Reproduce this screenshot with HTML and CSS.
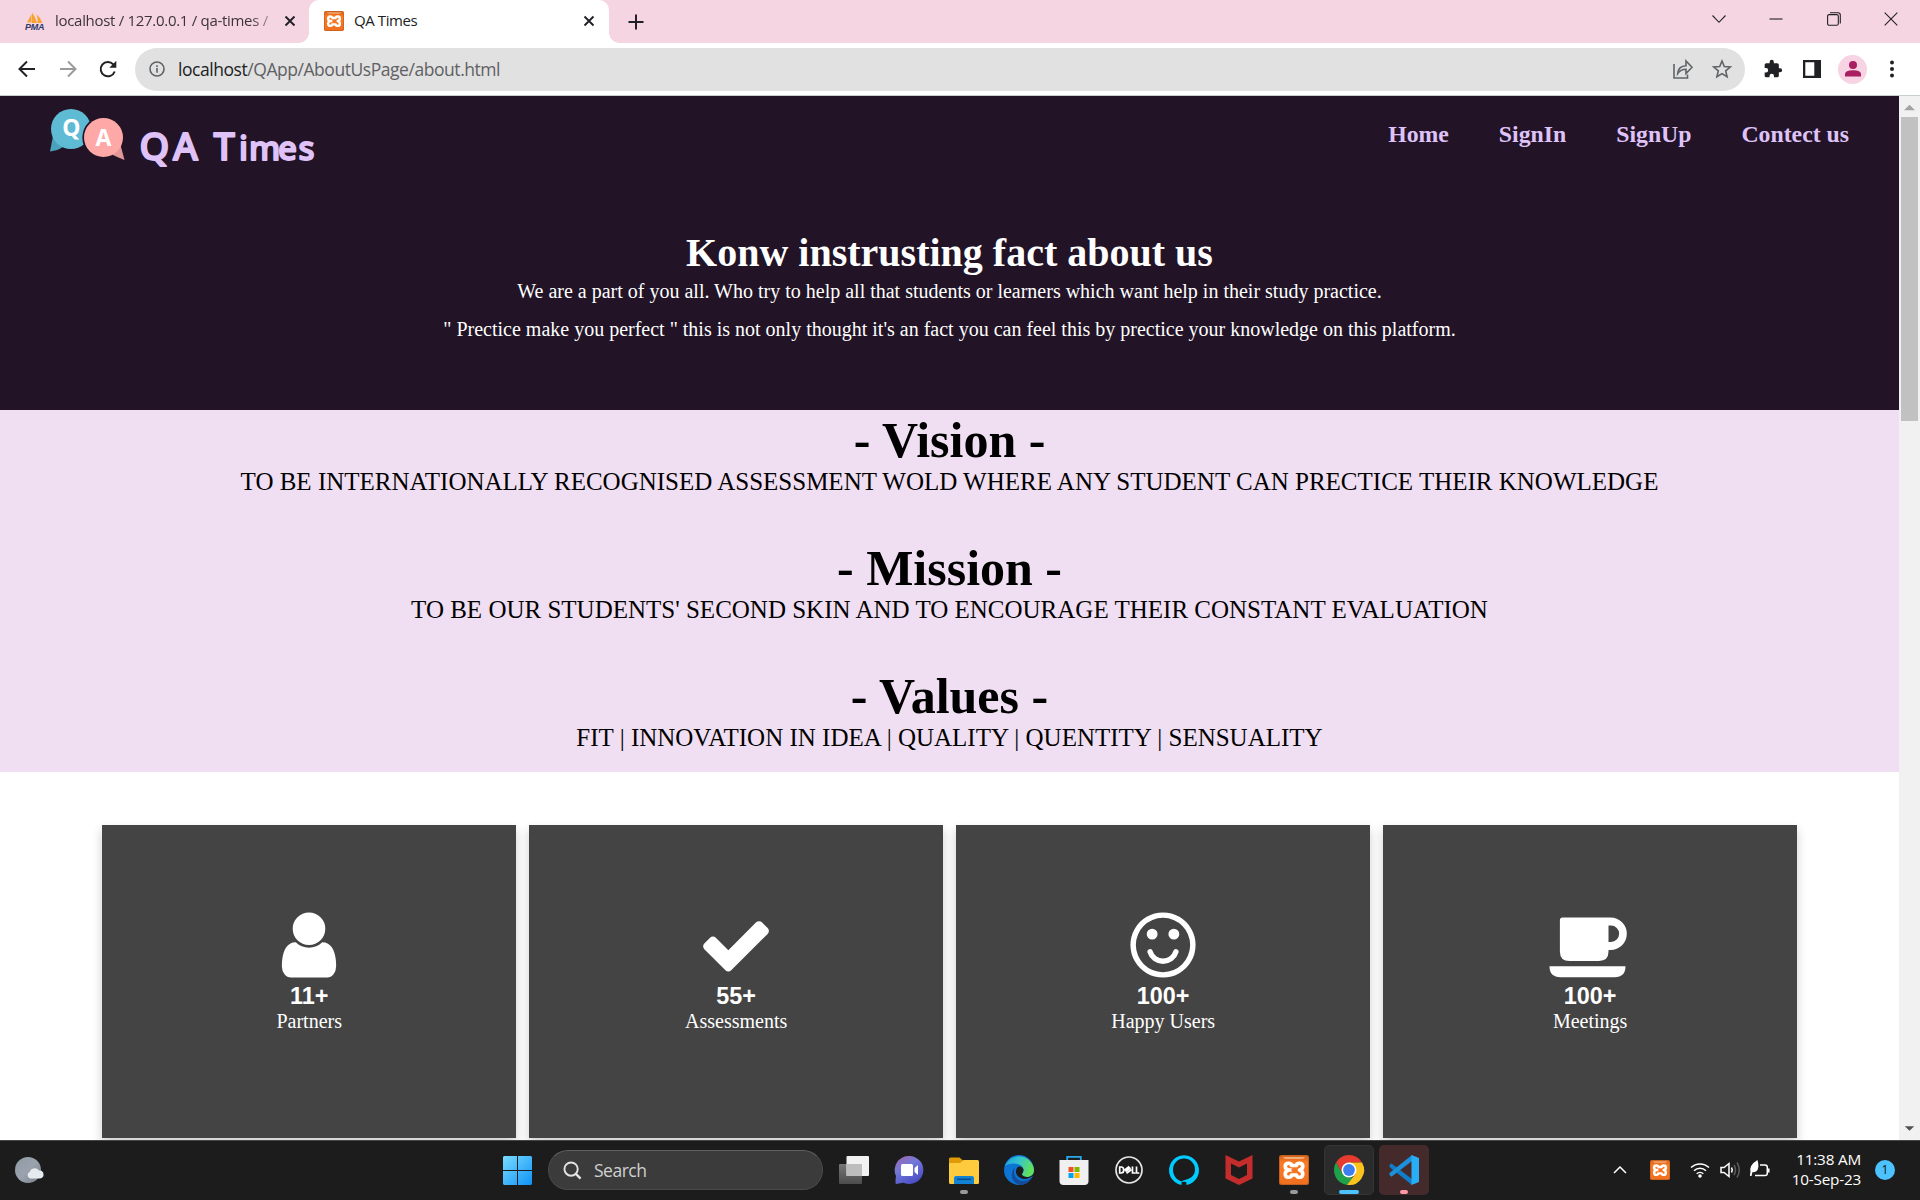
FILE: index.html
```html
<!DOCTYPE html>
<html lang="en">
<head>
<meta charset="utf-8">
<title>QA Times</title>
<link rel="stylesheet" href="styles.css">
</head>
<body>
<svg width="0" height="0" class="defs">
  <defs>
    <linearGradient id="xg" x1="0" y1="0" x2="0" y2="1"><stop offset="0" stop-color="#d9651b"/><stop offset=".25" stop-color="#fb7a24"/><stop offset="1" stop-color="#f07020"/></linearGradient>
    <symbol id="xampp" viewBox="0 0 30 30">
      <rect width="30" height="30" rx="2.5" fill="#c4601f"/><rect x="1" y="1" width="28" height="28" rx="2" fill="url(#xg)"/>
      <path d="M4 2.200h22q-1 1.600-4 1.600H8q-3 0-4-1.600z" fill="#f7c39c"/>
      <path d="M12.500 15H9.500q-3.300-1-3.300-3.500 0-3.300 3.300-3.300 3 0 3 2.300h5q0-2.300 3-2.300 3.300 0 3.300 3.300 0 2.500-3.300 3.500 3.300 1 3.300 4 0 3.300-3.300 3.300-3 0-3-2.300h-5q0 2.300-3 2.300-3.300 0-3.300-3.300 0-3 3.300-4" fill="none" stroke="#fff" stroke-width="3.600" stroke-linecap="round" stroke-linejoin="round"/>
      <path d="M12.500 15h5" stroke="#f47521" stroke-width="3"/>
    </symbol>
    <symbol id="x" viewBox="0 0 12 12"><path d="M1.500 1.500l9 9M10.500 1.500l-9 9" stroke="#202124" stroke-width="1.900" fill="none"/></symbol>
  </defs>
</svg>

<header class="tabstrip">
  <div class="tab">
    <svg class="favicon" viewBox="0 0 20 20"><path d="M2 11.500L6.500 3v8.500zM7 12V1.500Q10.500 6 12 12zM12.500 12q.5-4-.8-8.500Q16 7 17.500 12z" fill="#f8a331"/><text x="0" y="19.300" class="pma" textLength="19.500">PMA</text></svg>
    <span class="tab-title first">localhost / 127.0.0.1 / qa-times /</span>
    <svg class="x"><use href="#x"/></svg>
  </div>
  <div class="tab active">
    <svg class="favicon"><use href="#xampp"/></svg>
    <span class="tab-title">QA Times</span>
    <svg class="x"><use href="#x"/></svg>
  </div>
  <svg class="plus" viewBox="0 0 16 16"><path d="M8 .5v15M.5 8h15" stroke="#202124" stroke-width="2"/></svg>
  <div class="window-controls">
    <svg viewBox="0 0 14 14"><path d="M.5 3.500L7 10.300l6.500-6.800" /></svg>
    <svg viewBox="0 0 14 14"><path d="M.5 7h13"/></svg>
    <svg viewBox="0 0 14 14"><rect x=".6" y="2.600" width="10.700" height="10.700" rx="1.500"/><path d="M3 .7h8q2.300 0 2.300 2.300v8.500"/></svg>
    <svg viewBox="0 0 14 14"><path d="M.7.7l12.600 12.600M13.300.7L.7 13.300"/></svg>
  </div>
</header>

<div class="toolbar">
  <div class="nav-buttons">
    <svg viewBox="0 0 20 20"><path d="M18 10H3M10 2.500L2.500 10l7.500 7.500" stroke="#202124"/></svg>
    <svg viewBox="0 0 20 20"><path d="M2 10h15M10 2.500l7.500 7.500-7.500 7.500" stroke="#9a9a9a"/></svg>
    <svg viewBox="0 0 20 20"><path d="M16.700 12.500a7.200 7.200 0 1 1-1.400-7.200l1.700 1.700" stroke="#202124"/><path d="M18.300 1.800v7h-7z" fill="#202124"/></svg>
  </div>
  <div class="omnibox">
    <svg class="info" viewBox="0 0 16 16"><circle cx="8" cy="8" r="7"/><path d="M8 7v4.700M8 4.200v1.700"/></svg>
    <span class="url"><b>localhost</b>/QApp/AboutUsPage/about.html</span>
    <svg class="share" viewBox="0 0 20 20"><path d="M1 5v14h13.500v-3.500M4.700 14.500q.5-7.500 8.300-7.800V2l6 6.300-6 6.200V10.200q-5.500 0-8.300 4.300z"/></svg>
    <svg class="star" viewBox="0 0 20 20"><path d="M10 2l2.300 5.500 6 .5-4.600 3.900 1.400 5.800L10 14.600l-5.100 3.100 1.400-5.800L1.700 8l6-.5z"/></svg>
  </div>
  <div class="actions">
    <svg viewBox="0 0 24 24"><path d="M20.500 11H19V7a2 2 0 0 0-2-2h-4V3.500a2.500 2.500 0 0 0-5 0V5H4a2 2 0 0 0-2 2v3.800h1.500a2.700 2.700 0 0 1 0 5.400H2V20a2 2 0 0 0 2 2h3.800v-1.500a2.700 2.700 0 0 1 5.400 0V22H17a2 2 0 0 0 2-2v-4h1.500a2.500 2.500 0 0 0 0-5z"/></svg>
    <svg class="panel" viewBox="0 0 20 20"><path d="M1 1h18v18H1zM3.300 3.300v13.400h9V3.300z" fill-rule="evenodd"/></svg>
    <div class="avatar"><svg viewBox="0 0 16 16"><circle cx="8" cy="4" r="4"/><path d="M0 15.500V13q0-3.800 8-3.800t8 3.800v2.500z"/></svg></div>
    <svg viewBox="0 0 20 20"><circle cx="10" cy="3.500" r="2"/><circle cx="10" cy="10" r="2"/><circle cx="10" cy="16.500" r="2"/></svg>
  </div>
</div>

<div class="viewport">
  <main>
    <section class="hero">
      <nav class="nav">
        <svg class="logo" width="280" height="60" viewBox="0 0 280 60">
          <path d="M3 27L0 42.500q8-1 13-4.500z" fill="#4aa3bb"/>
          <circle cx="21" cy="20" r="20" fill="#5fbad4"/>
          <circle cx="53.500" cy="28.500" r="21.200" fill="#221426"/>
          <path d="M62 45.500q6 3 12.500 5.500L70 34z" fill="#e39797"/>
          <circle cx="53.500" cy="28.500" r="19.500" fill="#ffa8a8"/>
          <text class="bubble" x="12.300" y="27">Q</text><text class="bubble" x="45.500" y="37">A</text>
          <text class="wordmark" y="51" x="89.500 123 150 163.500">QA T<tspan class="low" x="189 199 228 248.500">imes</tspan></text>
        </svg>
        <ul class="links"><li>Home</li><li>SignIn</li><li>SignUp</li><li>Contect us</li></ul>
      </nav>
      <h1>Konw instrusting fact about us</h1>
      <p>We are a part of you all. Who try to help all that students or learners which want help in their study practice.</p>
      <p>" Prectice make you perfect " this is not only thought it's an fact you can feel this by prectice your knowledge on this platform.</p>
    </section>
    <section class="statements">
      <article><h2>- Vision -</h2><p>TO BE INTERNATIONALLY RECOGNISED ASSESSMENT WOLD WHERE ANY STUDENT CAN PRECTICE THEIR KNOWLEDGE</p></article>
      <article><h2>- Mission -</h2><p>TO BE OUR STUDENTS' SECOND SKIN AND TO ENCOURAGE THEIR CONSTANT EVALUATION</p></article>
      <article><h2>- Values -</h2><p>FIT | INNOVATION IN IDEA | QUALITY | QUENTITY | SENSUALITY</p></article>
    </section>
    <section class="cards">
      <div class="card">
        <svg viewBox="0 0 1792 1792"><path d="M1536 1399q0 109-62.500 187t-150.500 78h-854q-88 0-150.500-78t-62.500-187q0-85 8.500-160.500t31.500-152 58.500-131 94-89 134.500-34.500q131 128 313 128t313-128q76 0 134.500 34.500t94 89 58.500 131 31.500 152 8.500 160.500zm-256-887q0 159-112.500 271.500t-271.500 112.500-271.500-112.500-112.500-271.500 112.500-271.500 271.500-112.500 271.500 112.500 112.500 271.500z"/></svg>
        <h3>11+</h3><p>Partners</p>
      </div>
      <div class="card">
        <svg viewBox="0 0 1792 1792"><path d="M1671 566q0 40-28 68l-724 724-136 136q-28 28-68 28t-68-28l-136-136-362-362q-28-28-28-68t28-68l136-136q28-28 68-28t68 28l294 295 656-657q28-28 68-28t68 28l136 136q28 28 28 68z"/></svg>
        <h3>55+</h3><p>Assessments</p>
      </div>
      <div class="card">
        <svg viewBox="0 0 1792 1792"><path d="M1262 1075q-37 121-138 195t-228 74-228-74-138-195q-8-25 4-48.500t38-31.500q25-8 48.500 4t31.500 38q25 80 92.500 129.500t151.500 49.500 151.500-49.500 92.500-129.500q8-26 32-38t49-4 37 31.500 4 48.500zm-494-435q0 53-37.500 90.500t-90.500 37.500-90.500-37.500-37.500-90.500 37.500-90.500 90.500-37.500 90.500 37.500 37.500 90.500zm512 0q0 53-37.500 90.500t-90.500 37.500-90.500-37.500-37.500-90.500 37.500-90.500 90.500-37.500 90.500 37.500 37.500 90.500zm256 256q0-130-51-248.500t-136.500-204-204-136.500-248.500-51-248.500 51-204 136.500-136.500 204-51 248.500 51 248.500 136.500 204 204 136.500 248.500 51 248.500-51 204-136.500 136.500-204 51-248.500zm128 0q0 209-103 385.500t-279.500 279.500-385.500 103-385.500-103-279.500-279.500-103-385.500 103-385.500 279.500-279.500 385.500-103 385.500 103 279.500 279.500 103 385.500z"/></svg>
        <h3>100+</h3><p>Happy Users</p>
      </div>
      <div class="card">
        <svg class="wide" viewBox="0.500 0 80 76"><path fill-rule="evenodd" d="M13 10.500H61a16.300 16.300 0 0 1 0 32.600h-2v1.500q0 9.400-9.600 9.400H20q-9.600 0-9.600-9.600V13q0-2.500 2.600-2.500zM59 18.600v16.300h2.500a8.150 8.150 0 0 0 0-16.300zM0 59.300H76q0 10.900-11 10.900H11Q0 70.200 0 59.300z"/></svg>
        <h3>100+</h3><p>Meetings</p>
      </div>
    </section>
  </main>
  <aside class="scrollbar">
    <svg viewBox="0 0 14 8"><path d="M0 7.500h14L7 .5z" fill="#a3a3a3"/></svg>
    <div class="thumb"></div>
    <svg viewBox="0 0 14 8"><path d="M1 1h12L7 7z" fill="#505050"/></svg>
  </aside>
</div>

<footer class="taskbar">
  <svg class="weather" viewBox="0 0 30 28"><defs><linearGradient id="mo" x1="0" y1="0" x2="1" y2="1"><stop offset="0" stop-color="#8f99a4"/><stop offset=".5" stop-color="#9aa3ad"/><stop offset="1" stop-color="#76808c"/></linearGradient></defs><circle cx="13" cy="14" r="13" fill="url(#mo)"/><path d="M15 22.500a3.600 3.600 0 0 1 0-6.800 5 5 0 0 1 9-1.200 4 4 0 0 1 1 8z" fill="#e6ebf0"/></svg>
  <div class="center">
    <svg class="start" viewBox="0 0 29 29"><defs><linearGradient id="wi" x1="0" y1="0" x2="1" y2="1"><stop offset="0" stop-color="#79dcff"/><stop offset="1" stop-color="#0f92f5"/></linearGradient></defs><path d="M1 0h13v14H0V1zM15 0h13l1 1v13H15zM0 15h14v14H1l-1-1zM15 15h14v13l-1 1H15z" fill="url(#wi)"/></svg>
    <div class="search"><svg viewBox="0 0 20 20"><circle cx="8.500" cy="8.500" r="7" fill="none" stroke="#e4e4e4" stroke-width="2"/><path d="M13.500 13.500l5 5" stroke="#e4e4e4" stroke-width="2.500"/></svg><span>Search</span></div>
    <div class="apps">
      <div class="app"><svg viewBox="0 0 30 30"><defs><linearGradient id="tv" x1="0" y1="0" x2="0" y2="1"><stop offset="0" stop-color="#777"/><stop offset="1" stop-color="#4c4c4c"/></linearGradient></defs><rect x="0" y="9" width="23" height="20" rx="1" fill="url(#tv)"/><rect x="7.500" y="1" width="22.500" height="20" rx="1" fill="#f1f1f1"/><path d="M7.500 9H23v12H7.500z" fill="#bdbdbd"/></svg></div>
      <div class="app"><svg viewBox="0 0 30 30"><defs><linearGradient id="ch" x1="0" y1="0" x2=".6" y2="1"><stop offset="0" stop-color="#a263a8"/><stop offset=".45" stop-color="#7479d8"/><stop offset="1" stop-color="#4c4fc4"/></linearGradient></defs><path d="M15.500 1a14 14 0 1 1-6 26.700L2 29q-1-1 0-8A14 14 0 0 1 15.500 1z" fill="url(#ch)"/><rect x="7" y="9" width="12" height="12" rx="1.500" fill="#fff"/><path d="M20.500 13l3.500-3v10l-3.500-3z" fill="#fff"/></svg></div>
      <div class="app run"><svg viewBox="0 0 30 30"><path d="M1.500 2.500h9l3.500 3V12H0V4q0-1.500 1.500-1.500z" fill="#e09a05"/><path d="M0 8h11l3.500-3H28.500q1.500 0 1.500 1.500V28q0 1-1.500 1H1.500Q0 29 0 27.500z" fill="#ffcb3e"/><path d="M5 29v-6q0-2 2-2h16q2 0 2 2v6z" fill="#1283d3"/><path d="M8 24.300h14" stroke="#0a4b89" stroke-width="1.500"/></svg></div>
      <div class="app"><svg viewBox="0 0 30 30"><defs><linearGradient id="ed" x1="0" y1="0" x2="1" y2=".3"><stop offset="0" stop-color="#1b9de2"/><stop offset=".5" stop-color="#35c5cf"/><stop offset="1" stop-color="#62e05d"/></linearGradient></defs><circle cx="15" cy="15" r="15" fill="#0c74d2"/><path d="M1 11a15 15 0 0 1 29 4c0 4.500-3 7-7 7-3 0-5-1.200-5-3 0-1 1.500-1.500 1.500-4C19.500 11 15 8.500 10 8.500 6 8.500 3 9.500 1 11z" fill="url(#ed)"/><path d="M11 12.500c-3 6 1 13.500 8 13.500 3.500 0 6-1 8.500-3q-3.500 6.500-11 7C8 29 5 18 11 12.500z" fill="#134c9b"/><path d="M12 16c-.6 3.500 3 7.500 8 8q5 .2 10-4v-2q-3 4.500-7 4-3 0-5-2v-1q1.500-1.500 1.500-4.500-1-3-4-3t-3.500 4.500z" fill="#1c1c1c"/></svg></div>
      <div class="app"><svg viewBox="0 0 30 30"><path d="M8.200 8V1.800h13.600V8" fill="none" stroke="#27a8ea" stroke-width="1.800"/><path d="M.5 5h29v21q0 4-4 4h-21q-4 0-4-4z" fill="#f0f0f0"/><path d="M9.500 12h5v5h-5z" fill="#f25022"/><path d="M15.500 12h5v5h-5z" fill="#7fba00"/><path d="M9.500 18h5v5h-5z" fill="#00a4ef"/><path d="M15.500 18h5v5h-5z" fill="#ffb900"/></svg></div>
      <div class="app"><svg viewBox="0 0 30 30"><circle cx="15" cy="15" r="13" fill="none" stroke="#e6e6e6" stroke-width="1.700"/><g fill="none" stroke="#fff" stroke-width="1.700"><path d="M5.700 12v6h1.500q2.500 0 2.500-3t-2.500-3z"/><path d="M10.300 15.300l5-3.800M11.500 16.500l5-3.800M12.500 18.300l5-3.800"/><path d="M18.500 11.500V18H21.500M22.500 11.500V18H25.300"/></g></svg></div>
      <div class="app"><svg viewBox="0 0 30 30"><path fill-rule="evenodd" d="M12.500 30A15 15 0 1 1 17.500 30l-.3-3q-2-.5-4.500 0zM12.800 26.500C13.500 24.500 26 25 26 14.500a11 11 0 1 0-22 0c0 6 3.500 10.500 8.800 12z" fill="#00caff"/></svg></div>
      <div class="app"><svg viewBox="0 0 30 30"><path d="M1.500 0L15 6.500 28.500 0v23.500L15 30 1.500 23.500zM7 8.500v11.500l8 4 8-4V8.500l-8 4z" fill="#c52c2c" fill-rule="evenodd"/></svg></div>
      <div class="app run"><svg><use href="#xampp"/></svg></div>
      <div class="app open"><svg viewBox="0 0 30 30"><path d="M2 7.500A15 15 0 0 1 28 7.500H15l-6.500 11.300z" fill="#e63b2e"/><path d="M2 7.500l6.500 11.300L15 22.500h4l-6 7.400A15 15 0 0 1 2 7.500z" fill="#1fa04b"/><path d="M28 7.500A15 15 0 0 1 13 29.900L21.500 18.700 15 7.500z" fill="#fcc31f"/><circle cx="15" cy="15" r="7.500" fill="#fff"/><circle cx="15" cy="15" r="5.900" fill="#3c7ff0"/></svg></div>
      <div class="app alert"><svg viewBox="0 0 30 30"><path d="M.5 10l2-1.600L23 24v6L.5 12z" fill="#0f7dc8"/><path d="M.5 20l2 1.700L23 6V0L.5 18z" fill="#1b91dc"/><path d="M22.500 0L30 3v24l-7.500 3z" fill="#29adf5"/></svg></div>
    </div>
  </div>
  <div class="tray">
    <svg class="up" viewBox="0 0 14 14"><path d="M1 10l6-6 6 6"/></svg>
    <svg class="xa"><use href="#xampp"/></svg>
    <svg viewBox="0 0 20 20"><path d="M1 7.500a13 13 0 0 1 18 0M4 10.700a8.700 8.700 0 0 1 12 0M6.700 13.700a4.800 4.800 0 0 1 6.600 0"/><circle cx="10" cy="16" r="1.800" fill="#fff" stroke="none"/></svg>
    <svg viewBox="0 0 20 20"><path d="M1 7.500h3L9 3.500v13l-5-4H1zM11.500 7.500q1.500 2.500 0 5"/><path d="M14 5q3 5 0 10M17 2.500q4.500 7.500 0 15" stroke="#5c5c5c"/></svg>
    <svg viewBox="0 0 20 20"><path d="M10 5h5q2.300 0 2.300 2.300v6q0 2.300-2.300 2.300H5M18.800 8.500v4"/><path d="M0 16q0-3 .5-4Q-1 5 7.500 0q2.500 9-1.500 11.500-2 1-3.500.5L1.500 16z" fill="#fff" stroke="none"/></svg>
    <div class="clock"><span>11:38 AM</span><span>10-Sep-23</span></div>
    <span class="badge">1</span>
  </div>
</footer>
</body>
</html>
```
FILE: styles.css
```css
* { box-sizing: border-box; margin: 0; padding: 0; }
body {
  width: 1920px; height: 1200px; overflow: hidden; background: #fff;
  display: flex; flex-direction: column;
  font-family: "Liberation Serif", serif;
}
svg { display: block; flex: none; overflow: visible; }
.defs { position: absolute; }

/* Browser tabs */
.tabstrip {
  height: 43px; flex: none; background: #f6d5e3; display: flex; align-items: center;
  font: 15px "Open Sans", sans-serif; color: #3c3438;
}
.tab { width: 309px; height: 43px; display: flex; align-items: center; padding: 0 13px 2px 25px; }
.favicon { width: 20px; height: 20px; margin-right: 10px; }
.pma { font: italic bold 9px "Liberation Sans", sans-serif; fill: #2d3a68; }
.tab-title { flex: 1; white-space: nowrap; letter-spacing: -.4px; padding-bottom: 2px; }
.tab-title.first { letter-spacing: -.3px; margin-right: 13px; -webkit-mask-image: linear-gradient(90deg, #000 90%, transparent 106%); }
.x { width: 12px; height: 12px; }
.tab.active {
  width: 300px; padding: 0 14px 2px 15px; background: #fff; border-radius: 10px 10px 0 0;
  position: relative; color: #202124;
}
.tab.active::before, .tab.active::after {
  content: ""; position: absolute; bottom: 0; width: 10px; height: 10px;
}
.tab.active::before { left: -10px; background: radial-gradient(circle at 0 0, transparent 9.500px, #fff 10px); }
.tab.active::after { right: -10px; background: radial-gradient(circle at 100% 0, transparent 9.500px, #fff 10px); }
.plus { width: 16px; height: 16px; margin-left: 19px; }
.window-controls { margin-left: auto; padding: 0 22px 5px 0; display: flex; gap: 43.300px; }
.window-controls svg { width: 14px; height: 14px; fill: none; stroke: #222; stroke-width: 1.100; }

/* Address bar */
.toolbar { height: 53px; flex: none; display: flex; align-items: center; padding: 0 18px 0 17px; border-bottom: 1px solid #c9ced0; }
.nav-buttons { display: flex; gap: 20.500px; width: 118px; }
.nav-buttons svg { width: 20px; height: 20px; fill: none; stroke-width: 2; }
.omnibox { width: 1610px; height: 43px; border-radius: 22px; background: #e1e1e1; display: flex; align-items: center; padding: 0 13px 0 14px; }
.omnibox svg { fill: none; stroke: #5f6368; stroke-width: 1.600; }
.info { width: 16px; height: 16px; }
.url { flex: 1; margin-left: 13px; font: 17.500px "Open Sans", sans-serif; letter-spacing: -.45px; color: #5f6063; }
.url b { font-weight: 400; color: #202124; }
.share, .star { width: 20px; height: 20px; }
.star { margin-left: 19px; }
.actions { flex: 1; display: flex; align-items: center; justify-content: space-between; padding-left: 18px; }
.actions svg { width: 20px; height: 20px; fill: #202124; }
.actions .panel { margin-left: 2px; margin-right: -1px; }
.avatar { width: 29px; height: 29px; border-radius: 50%; background: #f7d3e3; display: flex; align-items: center; justify-content: center; margin-right: -1px; }
.actions .avatar svg { width: 16px; height: 16px; fill: #a81f62; }
.actions > svg:last-child { margin-left: -1px; }

/* Page */
.viewport { height: 1044px; flex: none; display: flex; overflow: hidden; }
main { width: 1899px; height: 1044px; overflow: hidden; }
.hero { height: 314px; background: #221426; color: #fff; text-align: center; }
.nav { display: flex; justify-content: space-between; height: 134px; padding: 13px 50px 0; }
.logo .bubble { font: bold 23px "Noto Sans", sans-serif; fill: #fff; }
.logo .wordmark { font: 500 38px "Noto Sans", sans-serif; fill: #dfc3f8; stroke: #dfc3f8; stroke-width: 1.800; stroke-linejoin: round; }
.logo .low { font-size: 33px; }
.links { list-style: none; display: flex; gap: 50px; font-size: 23.750px; font-weight: bold; line-height: 28px; color: #dfc3f8; padding-top: 11px; }
.hero h1 { font-size: 40px; line-height: 46px; }
.hero p { font-size: 20px; line-height: 23px; margin-bottom: 15px; }
.hero h1 + p { margin-top: 4px; }
.statements { height: 362px; background: #f0def2; text-align: center; color: #000; }
.statements article { height: 128px; padding-top: 2px; }
.statements h2 { font-size: 50px; line-height: 56px; }
.statements p { font-size: 25px; line-height: 28px; }
.cards { display: grid; grid-template-columns: repeat(4, 414.400px); gap: 12.600px; padding: 53px 0 0 102px; }
.card {
  height: 313px; background: #444; color: #fff; text-align: center;
  display: flex; flex-direction: column; align-items: center; padding-top: 82px;
  box-shadow: 0 5px 10px rgba(0,0,0,.2);
}
.card svg { width: 76px; height: 76px; fill: #fff; }
.card svg.wide { width: 80px; }
.card h3 { font: bold 23.400px/26px "Liberation Sans", sans-serif; }
.card p { font-size: 20px; line-height: 23px; margin-top: 1px; }
.scrollbar { width: 21px; background: #f1f1f1; display: flex; flex-direction: column; align-items: center; padding: 8px 0; }
.scrollbar svg { width: 11px; height: 7px; }
.thumb { width: 17px; height: 304px; margin-top: 6px; margin-bottom: auto; background: #c1c1c1; }

/* Taskbar */
.taskbar {
  height: 60px; flex: none; background: #1c1c1c; border-top: 1px solid #454545; color: #fff;
  display: flex; align-items: center; font-family: "Open Sans", sans-serif; padding-bottom: 1px;
}
.weather { width: 30px; height: 28px; margin-left: 15px; }
.center { margin-left: 458px; display: flex; align-items: center; }
.start { width: 29px; height: 29px; }
.search { width: 275px; height: 40px; margin-left: 16px; border-radius: 20px; background: #3b3b3b; border: 1px solid #4a4a4a; border-top-color: #606060; display: flex; align-items: center; gap: 12px; padding-left: 14px; font-size: 17.500px; color: #d0d0d0; }
.search span { letter-spacing: -.5px; }
.search svg { width: 19px; height: 19px; }
.apps { display: flex; gap: 5px; margin-left: 6px; }
.app { width: 50px; height: 50px; border-radius: 5px; display: flex; align-items: center; justify-content: center; position: relative; }
.app svg { width: 30px; height: 30px; }
.app::after { content: ""; position: absolute; bottom: 1px; width: 8px; height: 4px; border-radius: 2px; }
.run::after { background: #9a9a9a; }
.open { background: #2b2b2b; border: 1px solid #353535; }
.open::after { width: 20px; bottom: 0; background: #4cc2ff; }
.alert { background: #452a2c; }
.alert::after { background: #ff99a4; }
.tray { margin-left: auto; margin-right: 25px; display: flex; align-items: center; gap: 10px; }
.tray svg { width: 20px; height: 20px; fill: none; stroke: #fff; stroke-width: 1.500; }
.tray .up { width: 14px; height: 14px; margin-right: 13px; }
.tray .xa { stroke: none; margin-right: 10px; }
.clock { width: 81px; display: flex; flex-direction: column; align-items: flex-end; font-size: 15.300px; line-height: 20px; letter-spacing: -.2px; white-space: nowrap; padding-bottom: 2px; }
.badge { width: 20px; height: 20px; margin-left: 4px; border-radius: 50%; background: #4cc2ff; color: #111; font-size: 12px; line-height: 20px; text-align: center; }
```
